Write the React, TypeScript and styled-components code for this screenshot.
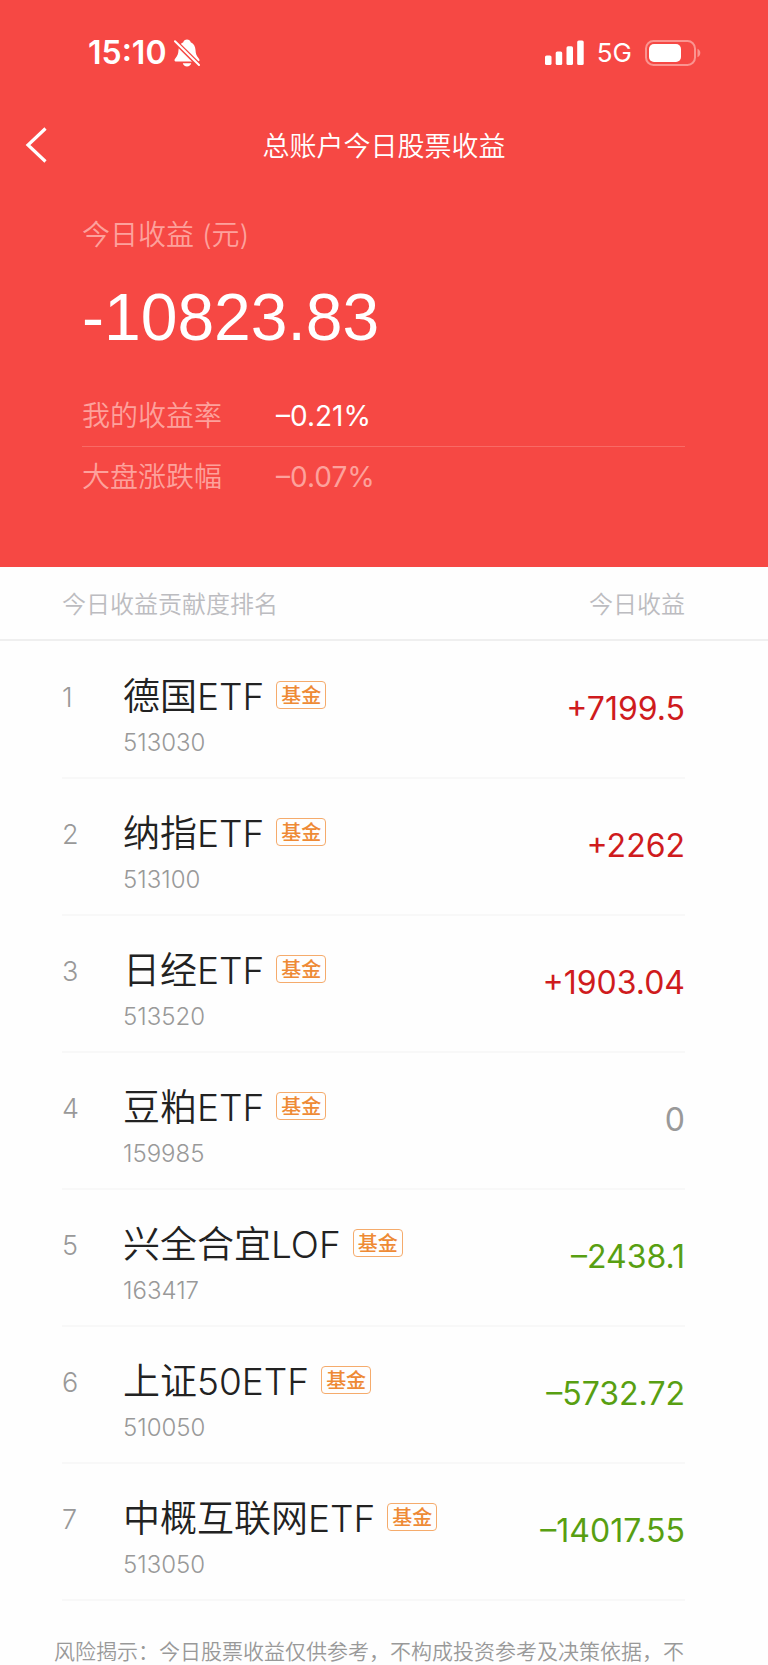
import React from "react";
import styled, { createGlobalStyle } from "styled-components";

const cjk = `"Noto Sans CJK SC", sans-serif`;
const latin = `Inter, "Noto Sans CJK SC", sans-serif`;
const red = "#f64844";

const GlobalStyle = createGlobalStyle`
  *, *::before, *::after { box-sizing: border-box; }
  body {
    margin: 0;
    background: #fefefe;
    font-family: ${cjk};
    font-weight: 350;
    color: #222;
  }
`;

const Hero = styled.header`
  padding-bottom: 60px;
  background: ${red};
  color: #fff;
`;

const StatusBar = styled.div`
  display: flex;
  align-items: center;
  justify-content: space-between;
  height: 105px;
  padding: 0 67px 0 88px;
`;

const StatusGroup = styled.div`
  display: flex;
  align-items: center;
  gap: ${(p: { $gap: number }) => p.$gap}px;
`;

const Clock = styled.time`
  font: 600 32px/40px ${latin};
`;

const Network = styled.span`
  font: 400 26px/40px ${latin};
`;

const NavBar = styled.nav`
  display: grid;
  grid-template-columns: 80px 1fr 80px;
  align-items: center;
  height: 80px;
`;

const BackButton = styled.button`
  display: flex;
  align-items: center;
  height: 56px;
  padding: 0 0 0 24px;
  border: 0;
  background: none;
  color: inherit;
  cursor: pointer;
`;

const Title = styled.h1`
  margin: 0;
  font-size: 27px;
  line-height: 40px;
  font-weight: 350;
  text-align: center;
`;

const Summary = styled.section`
  padding: 28px 83px 0 82px;
`;

const SummaryLabel = styled.h2`
  margin: 0;
  color: #fda19c;
  font: 350 28px/44px ${latin};
`;

const Total = styled.p`
  margin: 20px 0 28px;
  font: 400 66px/80px "Liberation Sans", Arial, sans-serif;
`;

const RateList = styled.dl`
  margin: 0;
`;

const RateRow = styled.div<{ $muted?: boolean }>`
  display: flex;
  align-items: center;
  height: 61px;
  color: ${(p) => (p.$muted ? "#fda19c" : "#fff")};
  & + & { border-top: 1px solid #f96a65; }
`;

const RateName = styled.dt`
  width: 194px;
  color: #fda19c;
  font: 350 28px/40px ${latin};
`;

const RateValue = styled.dd`
  margin: 0;
  font: 400 28px/40px ${latin};
`;

const Ranking = styled.table`
  display: block;
  width: 100%;
`;

const RankingHead = styled.thead`
  display: block;
  border-bottom: 2px solid #efefef;
`;

const HeadRow = styled.tr`
  display: flex;
  align-items: center;
  justify-content: space-between;
  height: 72px;
  padding: 0 83px 0 62px;
`;

const HeadCell = styled.th`
  padding: 0;
  color: #bcbcc0;
  font-size: 24px;
  line-height: 36px;
  font-weight: 350;
`;

const RankingBody = styled.tbody`
  display: block;
  padding: 1px 83px 0 62px;
`;

const FundRow = styled.tr`
  display: grid;
  grid-template-columns: 61px 1fr auto;
  height: 137px;
  border-bottom: 2px solid #f8f8f8;
`;

const Rank = styled.td`
  padding: 36px 0 0;
  color: #999;
  font: 350 27px/40px ${latin};
`;

const Fund = styled.td`
  padding: 31px 0 0;
`;

const NameLine = styled.div`
  display: flex;
  align-items: center;
  gap: 12px;
  height: 48px;
`;

const Name = styled.span`
  font: 350 37px/48px ${latin};
`;

const Badge = styled.span`
  margin-bottom: 4px;
  padding: 0 4px;
  border: 1px solid #f5ab6c;
  border-radius: 4px;
  color: #ee8a35;
  font-size: 20px;
  line-height: 26px;
  font-weight: 500;
`;

const Code = styled.div`
  margin-top: 6px;
  color: #999;
  font: 350 24px/32px ${latin};
`;

type Tone = "up" | "flat" | "down";
const tones: Record<Tone, string> = { up: "#cf1b1d", flat: "#999", down: "#589f12" };

const Amount = styled.td<{ $tone: Tone }>`
  padding: 47px 0 0;
  color: ${(p) => tones[p.$tone]};
  font: 400 32px/40px ${latin};
`;

const Disclaimer = styled.p`
  margin: 0;
  padding: 35px 72px 0 54px;
  color: #999;
  font-size: 21px;
  line-height: 29px;
`;

const MutedBell = () => (
  <svg width="26" height="28" viewBox="0 0 26 28" fill="none" aria-label="静音">
    <path
      fill="#fff"
      d="M13 0.500c-1.900 0-3.300 1.100-3.700 2.700C6.200 4.500 4.700 7.300 4.500 11c-.2 4-.9 5.600-2.900 8-.8 1-1.100 1.500-1.100 2.200 0 .9.700 1.400 1.800 1.400h21.400c1.100 0 1.800-.5 1.800-1.400 0-.7-.3-1.200-1.100-2.200-2-2.400-2.700-4-2.900-8-.2-3.700-1.700-6.500-4.800-7.800C16.300 1.600 14.900.5 13 .5z"
    />
    <path fill="#fff" d="M8.800 24.200h8.400c-.4 1.900-2 3.200-4.200 3.200s-3.800-1.300-4.200-3.200z" />
    <path d="M0 1.500L26 27.200" stroke={red} strokeWidth="4.800" />
    <path d="M1 2.300L25 26" stroke="#fff" strokeWidth="2" strokeLinecap="round" />
  </svg>
);

const Signal = () => (
  <svg width="39" height="26" viewBox="0 0 39 26" fill="#fff" aria-label="信号">
    <rect x="0" y="15.500" width="6.500" height="9.500" rx="1.600" />
    <rect x="10.700" y="11.500" width="6.500" height="13.500" rx="1.600" />
    <rect x="21.500" y="6.300" width="6.500" height="18.700" rx="1.600" />
    <rect x="32.200" y="0.500" width="6.500" height="24.500" rx="1.600" />
  </svg>
);

const Battery = () => (
  <svg width="56" height="26" viewBox="0 0 56 26" fill="none" aria-label="电量">
    <rect x="1" y="1" width="49" height="24" rx="7.500" stroke="#fb9490" strokeWidth="2" />
    <rect x="4" y="4" width="32" height="18" rx="5" fill="#fff" />
    <path d="M52.500 8.800c1.800.8 2.800 2.300 2.800 4.200s-1 3.400-2.800 4.200z" fill="#fb9490" />
  </svg>
);

const BackIcon = () => (
  <svg width="24" height="36" viewBox="0 0 24 36" fill="none">
    <path d="M21.500 1.500L4 18L21.500 34.500" stroke="#fff" strokeWidth="3.200" />
  </svg>
);

const funds: { name: string; code: string; amount: string; tone: Tone }[] = [
  { name: "德国ETF", code: "513030", amount: "+7199.5", tone: "up" },
  { name: "纳指ETF", code: "513100", amount: "+2262", tone: "up" },
  { name: "日经ETF", code: "513520", amount: "+1903.04", tone: "up" },
  { name: "豆粕ETF", code: "159985", amount: "0", tone: "flat" },
  { name: "兴全合宜LOF", code: "163417", amount: "–2438.1", tone: "down" },
  { name: "上证50ETF", code: "510050", amount: "–5732.72", tone: "down" },
  { name: "中概互联网ETF", code: "513050", amount: "–14017.55", tone: "down" },
];

export default function App() {
  return (
    <>
      <GlobalStyle />
      <Hero>
        <StatusBar>
          <StatusGroup $gap={7}>
            <Clock>15:10</Clock>
            <MutedBell />
          </StatusGroup>
          <StatusGroup $gap={13}>
            <Signal />
            <Network>5G</Network>
            <Battery />
          </StatusGroup>
        </StatusBar>
        <NavBar>
          <BackButton type="button" aria-label="返回">
            <BackIcon />
          </BackButton>
          <Title>总账户今日股票收益</Title>
        </NavBar>
        <Summary>
          <SummaryLabel>今日收益 (元)</SummaryLabel>
          <Total>-10823.83</Total>
          <RateList>
            <RateRow>
              <RateName>我的收益率</RateName>
              <RateValue>–0.21%</RateValue>
            </RateRow>
            <RateRow $muted>
              <RateName>大盘涨跌幅</RateName>
              <RateValue>–0.07%</RateValue>
            </RateRow>
          </RateList>
        </Summary>
      </Hero>
      <main>
        <Ranking>
          <RankingHead>
            <HeadRow>
              <HeadCell scope="col" colSpan={2}>今日收益贡献度排名</HeadCell>
              <HeadCell scope="col">今日收益</HeadCell>
            </HeadRow>
          </RankingHead>
          <RankingBody>
            {funds.map((fund, i) => (
              <FundRow key={fund.code}>
                <Rank>{i + 1}</Rank>
                <Fund>
                  <NameLine>
                    <Name>{fund.name}</Name>
                    <Badge>基金</Badge>
                  </NameLine>
                  <Code>{fund.code}</Code>
                </Fund>
                <Amount $tone={fund.tone}>{fund.amount}</Amount>
              </FundRow>
            ))}
          </RankingBody>
        </Ranking>
        <Disclaimer>风险揭示：今日股票收益仅供参考，不构成投资参考及决策依据，不</Disclaimer>
      </main>
    </>
  );
}
